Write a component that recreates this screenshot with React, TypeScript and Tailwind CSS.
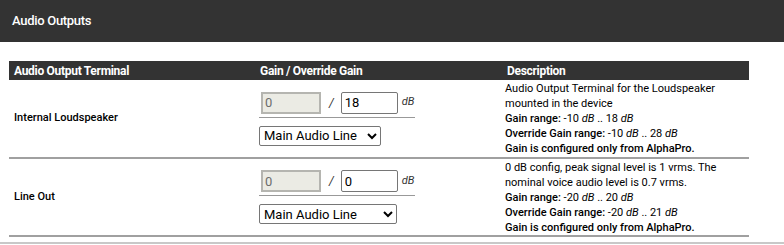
import React from 'react';

type Row = {
  name: string;
  gain: string;
  selectWidth: string;
  desc: string[];
  range: [string, string];
  override: [string, string];
};

const rows: Row[] = [
  {
    name: 'Internal Loudspeaker',
    gain: '18',
    selectWidth: 'w-[122px]',
    desc: ['Audio Output Terminal for the Loudspeaker', 'mounted in the device'],
    range: ['-10', '18'],
    override: ['-10', '28'],
  },
  {
    name: 'Line Out',
    gain: '0',
    selectWidth: 'w-[138px]',
    desc: ['0 dB config, peak signal level is 1 vrms. The', 'nominal voice audio level is 0.7 vrms.'],
    range: ['-20', '20'],
    override: ['-20', '21'],
  },
];

const GainCell = ({ row }: { row: Row }) => (
  <div className="flex flex-col">
    <div className="flex w-[156px] items-center border-b border-[#999] pb-[3px] pl-[2px]">
      <input
        disabled
        value="0"
        readOnly
        className="h-[22px] w-[60px] border-2 border-[#b5b5b0] bg-[#ebebe4] px-[2px] text-[13px] text-[#6d6d6d]"
      />
      <span className="ml-[8px] mr-[7px] text-[12px] italic text-[#333]">/</span>
      <input
        value={row.gain}
        readOnly
        className="h-[22px] w-[57px] rounded-[2px] border border-[#767676] bg-white px-[3px] text-[13px] text-black"
      />
      <span className="ml-[4px] text-[11px] italic text-[#333]">dB</span>
    </div>
    <select
      defaultValue="main"
      className={`mt-[8px] h-[20px] ${row.selectWidth} rounded-[2px] border border-[#767676] bg-white text-[13px] text-black`}
    >
      <option value="main">Main Audio Line</option>
    </select>
  </div>
);

const Desc = ({ row }: { row: Row }) => (
  <div className="text-[11px] leading-[15px] text-black">
    {row.desc.map((d, i) => (
      <div key={i}>{d}</div>
    ))}
    <div>
      <span className="font-medium">Gain range:</span> {row.range[0]} <i>dB</i> .. {row.range[1]} <i>dB</i>
    </div>
    <div>
      <span className="font-medium">Override Gain range:</span> {row.override[0]} <i>dB</i> .. {row.override[1]} <i>dB</i>
    </div>
    <div className="font-medium">Gain is configured only from AlphaPro.</div>
  </div>
);

export default function App() {
  return (
    <div className="h-[245px] w-[784px] bg-white font-['Roboto',sans-serif]">
      <div className="flex h-[42px] items-center bg-[#333] pl-[12px] text-[13px] font-medium tracking-[-0.3px] text-white">
        Audio Outputs
      </div>
      <div className="px-[9px] pt-[19px]">
        <table className="w-[740px] table-fixed border-collapse">
          <thead>
            <tr className="h-[19px] bg-[#333] text-left text-[12px] font-bold tracking-[-0.3px] text-white">
              <th className="w-[241px] pl-[5px] font-bold">Audio Output Terminal</th>
              <th className="w-[248px] pl-[10px] font-bold">Gain / Override Gain</th>
              <th className="pl-[9px] font-bold">Description</th>
            </tr>
          </thead>
          <tbody>
            {rows.map((r) => (
              <tr key={r.name} className="h-[78px] border-b-2 border-[#a0a0a0]">
                <td className="pl-[5px] align-middle text-[11px] font-medium text-black">{r.name}</td>
                <td className="pl-[9px] align-middle">
                  <GainCell row={r} />
                </td>
                <td className="pl-[7px] align-middle">
                  <Desc row={r} />
                </td>
              </tr>
            ))}
          </tbody>
        </table>
      </div>
      <div className="mt-[5px] border-b-2 border-[#c8c8c8]" />
    </div>
  );
}
